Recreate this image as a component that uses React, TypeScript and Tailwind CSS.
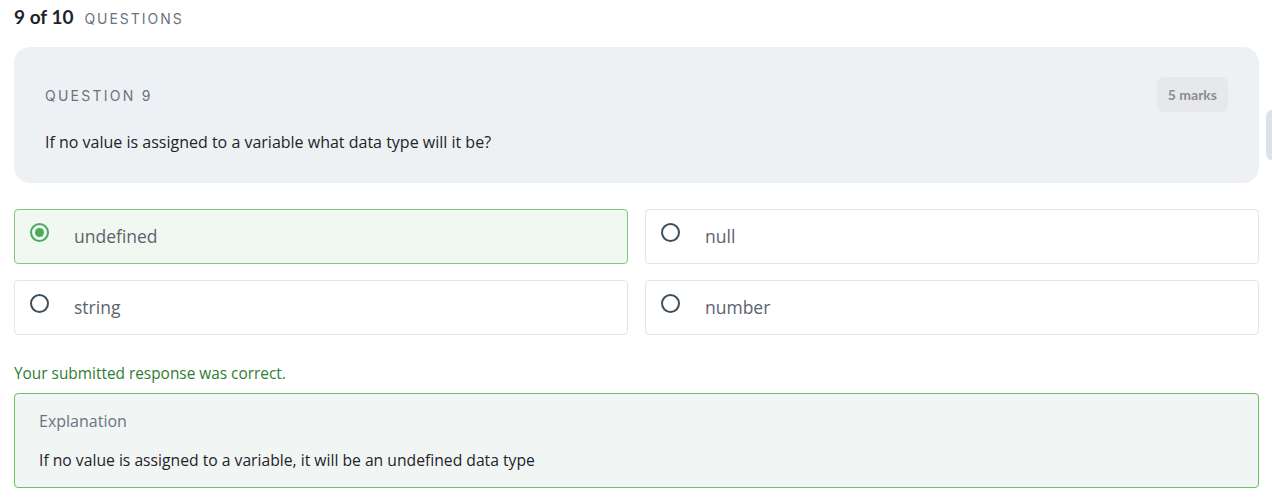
import { useState } from 'react'

const options = ['undefined', 'null', 'string', 'number']

export default function App() {
  const [selected] = useState('undefined')

  return (
    <div className="relative min-h-[502px] bg-white pl-[14px] pr-[13px] pt-[3px] font-['Open_Sans',sans-serif]">
      <div className="flex items-baseline gap-[11px]">
        <span className="font-['Lato',sans-serif] text-[19px] font-bold text-[#1f2328]">9 of 10</span>
        <span className="font-['Inter',sans-serif] text-[14px] tracking-[0.14em] text-[#6b7280]">QUESTIONS</span>
      </div>

      <div className="mt-[15px] rounded-[16px] bg-[#eef1f4] px-[31px] pb-[29px] pt-[30px]">
        <div className="flex items-start justify-between">
          <span className="mt-[8px] font-['Inter',sans-serif] text-[14px] tracking-[0.16em] text-[#6b7280]">QUESTION 9</span>
          <span className="rounded-[6px] bg-[#e6e8ea] px-[11px] py-[7px] font-['Lato',sans-serif] text-[14px] font-bold text-[#8a8d92]">5 marks</span>
        </div>
        <p className="mt-[18px] text-[16px] text-[#1f2328]">If no value is assigned to a variable what data type will it be?</p>
      </div>

      <div className="mt-[26px] grid grid-cols-2 gap-x-[17px] gap-y-[16px]">
        {options.map(o => {
          const on = o === selected
          return (
            <div
              key={o}
              className={`flex h-[55px] items-center gap-[25px] rounded-[4px] border px-[15px] ${on ? 'border-[#80c97c] bg-[#f1f8f1]' : 'border-[#e3e5e8] bg-white'}`}
            >
              <span className={`-mt-[7px] flex h-[19px] w-[19px] shrink-0 items-center justify-center rounded-full border-2 ${on ? 'border-[#4caa5f]' : 'border-[#3d4f5c]'}`}>
                {on && <span className="h-[9px] w-[9px] rounded-full bg-[#4caa5f]" />}
              </span>
              <span className="text-[17.5px] text-[#5b636d]">{o}</span>
            </div>
          )
        })}
      </div>

      <p className="mt-[27px] text-[15.4px] text-[#2e7d32]">Your submitted response was correct.</p>

      <div className="mt-[8px] rounded-[4px] border border-[#6cc25c] bg-[#f1f6f5] px-[24px] pb-[15px] pt-[15px]">
        <p className="text-[16px] text-[#6b7280]">Explanation</p>
        <p className="mt-[16px] text-[15.7px] text-[#1f2328]">If no value is assigned to a variable, it will be an undefined data type</p>
      </div>

      <div className="absolute right-0 top-[110px] h-[50px] w-[6px] rounded-l-[6px] bg-[#dbe2e8]" />
    </div>
  )
}
